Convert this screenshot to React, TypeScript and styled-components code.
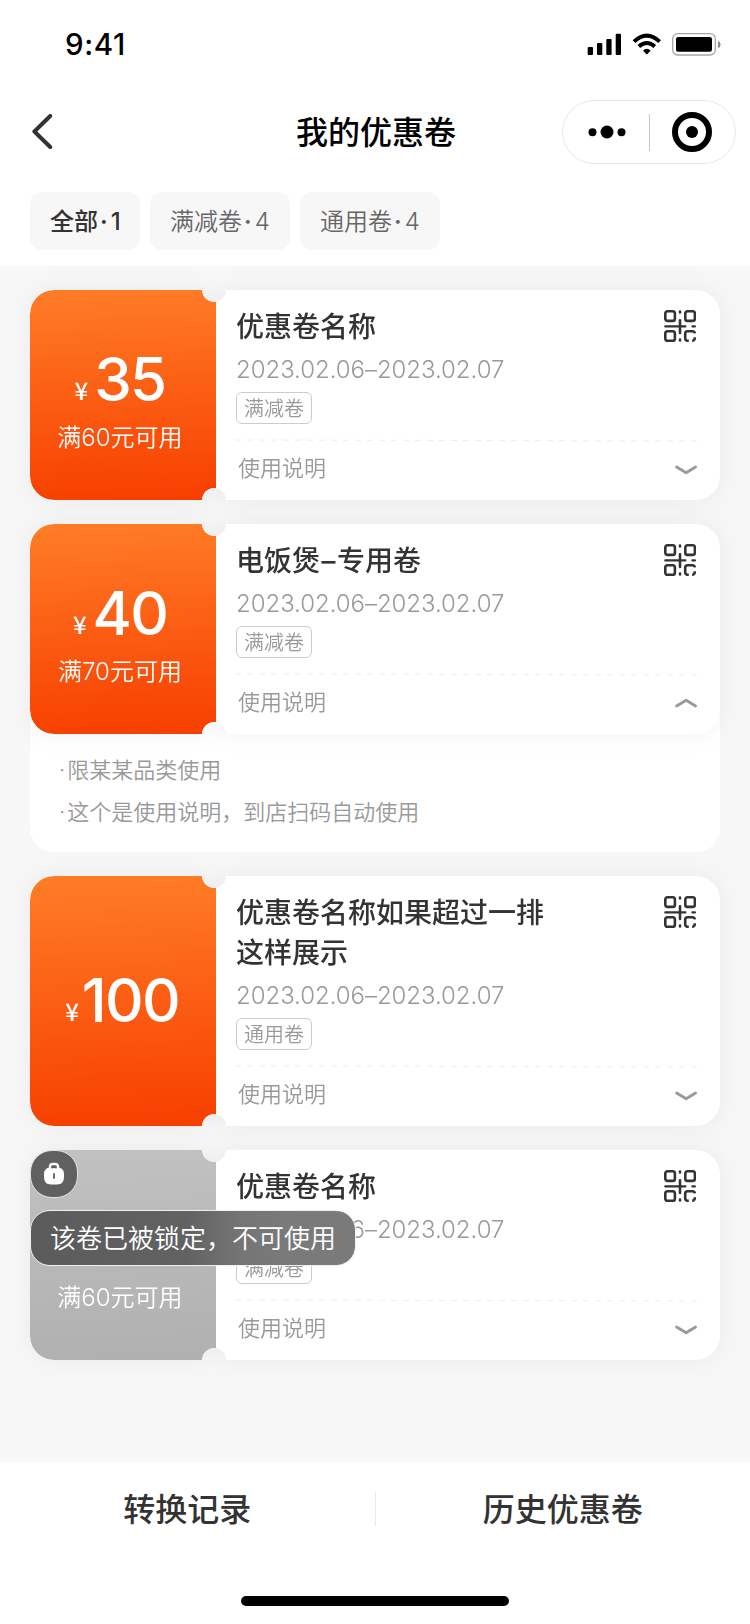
import React, { useState } from 'react';
import styled, { createGlobalStyle } from 'styled-components';

const GlobalStyle = createGlobalStyle`
  *, *::before, *::after { box-sizing: border-box; }
  body {
    margin: 0;
    background: #fff;
    font-family: Inter, "Noto Sans CJK SC", sans-serif;
    color: #333;
  }
  button {
    font: inherit;
    color: inherit;
    background: none;
    border: 0;
    padding: 0;
  }
  svg { display: block; }
`;

const Page = styled.div`
  width: 750px;
  height: 1624px;
  display: flex;
  flex-direction: column;
  background: #f7f7f7;
  overflow: hidden;
`;

const Header = styled.header`
  height: 266px;
  background: #fff;
`;

const StatusBar = styled.div`
  height: 88px;
  padding: 0 29px 0 65px;
  display: flex;
  align-items: center;
  justify-content: space-between;
`;

const Clock = styled.span`
  font-size: 29.5px;
  font-weight: 450;
  line-height: 36px;
  color: #000;
  letter-spacing: 0.6px;
`;

const NavBar = styled.div`
  height: 88px;
  padding: 0 13px 0 30px;
  display: grid;
  grid-template-columns: 175px 1fr 175px;
  align-items: center;
`;

const NavTitle = styled.h1`
  margin: 0;
  padding: 2px 15px 0 0;
  font-size: 32px;
  font-weight: 500;
  line-height: 44px;
  text-align: center;
  color: #000;
`;

const Capsule = styled.div`
  width: 174px;
  height: 64px;
  border: 1px solid #e8e8e8;
  border-radius: 32px;
  display: flex;
  align-items: center;
`;

const CapsuleHalf = styled.button`
  flex: 1;
  display: flex;
  justify-content: center;
`;

const CapsuleDivider = styled.span`
  width: 1px;
  height: 37px;
  background: #c8c8c8;
`;

const Tabs = styled.nav`
  padding: 16px 30px 0;
  display: flex;
  gap: 10px;
`;

const Tab = styled.button<{ $active?: boolean; $width: number }>`
  width: ${(p) => p.$width}px;
  height: 58px;
  padding-left: 20px;
  border-radius: 12px;
  background: #f7f7f7;
  text-align: left;
  white-space: nowrap;
  font-size: 24px;
  line-height: 60px;
  font-weight: ${(p) => (p.$active ? 500 : 350)};
  color: ${(p) => (p.$active ? '#333' : '#666')};
`;

const Dot = styled.span`
  margin: 0 3px 0 2px;
  font-weight: 600;
`;

const List = styled.main`
  flex: 1;
  padding: 24px 30px 0;
  display: flex;
  flex-direction: column;
  gap: 24px;
`;

const Item = styled.article`
  position: relative;
`;

const CardShadow = styled.div`
  position: relative;
  z-index: 1;
  filter: drop-shadow(0 0 12px rgba(0, 0, 0, 0.05));
`;

const Card = styled.div<{ $tall?: boolean }>`
  height: ${(p) => (p.$tall ? 250 : 210)}px;
  display: flex;
  border-radius: 24px;
  background: #fff;
  overflow: hidden;
  mask-image:
    radial-gradient(circle at 184px 0, transparent 11.7px, #000 12.3px),
    radial-gradient(circle at 184px 100%, transparent 11.7px, #000 12.3px);
  mask-composite: intersect;
`;

const ValuePanel = styled.div<{ $locked?: boolean }>`
  flex: 0 0 186px;
  padding-right: 6px;
  display: flex;
  flex-direction: column;
  align-items: center;
  justify-content: center;
  color: #fff;
  background: ${(p) =>
    p.$locked
      ? 'linear-gradient(177deg, #c1c1c1, #b0b0b0)'
      : 'linear-gradient(177deg, #ff7d27, #f73e00)'};
`;

const Amount = styled.div<{ $alone?: boolean; $covered?: boolean }>`
  height: 64px;
  margin-top: ${(p) => (p.$alone ? -2 : 11)}px;
  padding-left: ${(p) => (p.$alone ? 4 : 0)}px;
  display: flex;
  align-items: baseline;
  font-size: 60px;
  line-height: 64px;
  font-weight: 500;
  letter-spacing: -1.8px;
  visibility: ${(p) => (p.$covered ? 'hidden' : 'visible')};
`;

const Currency = styled.span<{ $tight?: boolean }>`
  position: relative;
  top: -1px;
  margin-right: ${(p) => (p.$tight ? 3 : 6)}px;
  font-family: "Noto Sans CJK SC", sans-serif;
  font-size: 24px;
  letter-spacing: 0;
`;

const Threshold = styled.div`
  margin-top: 10px;
  font-size: 24px;
  line-height: 34px;
  font-weight: 350;
  white-space: nowrap;
`;

const Body = styled.div`
  flex: 1;
  padding: 16px 22px 0 20px;
  display: flex;
  flex-direction: column;
`;

const TopRow = styled.div`
  display: flex;
  justify-content: space-between;
  align-items: flex-start;
`;

const Name = styled.h2`
  margin: 0;
  padding-top: 1px;
  width: 312px;
  font-size: 28px;
  line-height: 40px;
  font-weight: 500;
  color: #333;
`;

const NameDash = styled.span`
  margin: 0 1.5px;
`;

const QrButton = styled.button`
  padding: 4px 2px 0 0;
`;

const Period = styled.div`
  margin-top: 6px;
  font-size: 24px;
  line-height: 34px;
  font-weight: 300;
  letter-spacing: -0.05px;
  color: #999;
`;

const Tag = styled.span`
  align-self: flex-start;
  margin-top: 5px;
  width: 76px;
  height: 32px;
  border: 1px solid #ccc;
  border-radius: 6px;
  text-align: center;
  font-size: 20px;
  line-height: 32px;
  font-weight: 350;
  color: #999;
`;

const Dashes = styled.svg`
  margin: 14px 0 0 -1px;
`;

const UsageRow = styled.button`
  height: 54px;
  padding-left: 2px;
  display: flex;
  align-items: center;
  justify-content: space-between;
  font-size: 22px;
  line-height: 52px;
  font-weight: 350;
  color: #999;
`;

const UsageLabel = styled.span`
  height: 54px;
`;

const Rules = styled.div`
  margin-top: -34px;
  height: 152px;
  padding: 49px 28px 0;
  border-radius: 0 0 24px 24px;
  background: #fff;
  font-size: 22px;
  line-height: 42px;
  font-weight: 350;
  color: #999;
`;

const RuleDot = styled.span`
  margin: 0 2px 0 1px;
`;

const LockBadge = styled.div`
  position: absolute;
  z-index: 2;
  left: 0;
  top: 0;
  width: 48px;
  height: 48px;
  border: 1px solid #e2e2e2;
  border-radius: 22px;
  background: #606060;
  display: flex;
  align-items: center;
  justify-content: center;
`;

const LockTip = styled.div`
  position: absolute;
  z-index: 2;
  left: 0;
  top: 60px;
  width: 326px;
  height: 56px;
  padding-left: 19px;
  border: 1px solid #f0f0f0;
  border-radius: 20px;
  background: linear-gradient(90deg, #5b5b5b 0, #626262 48%, #757575 65%, #7a7a7a 80%);
  color: #fff;
  font-size: 26px;
  line-height: 56px;
  font-weight: 350;
  white-space: nowrap;
`;

const Footer = styled.footer`
  height: 162px;
  background: #fff;
  display: flex;
  flex-direction: column;
  align-items: center;
  justify-content: space-between;
  padding-bottom: 18px;
`;

const FooterActions = styled.div`
  width: 100%;
  height: 94px;
  display: flex;
  align-items: center;
`;

const FooterButton = styled.button`
  flex: 1;
  padding-top: 2px;
  text-align: center;
  font-size: 32px;
  line-height: 44px;
  font-weight: 500;
`;

const FooterDivider = styled.span`
  width: 1px;
  height: 34px;
  background: #e9e9e9;
`;

const HomeIndicator = styled.div`
  width: 268px;
  height: 10px;
  border-radius: 5px;
  background: #000;
`;

const StatusIcons = () => (
  <svg width="134" height="26" viewBox="587 31 134 26">
    <rect x="587.7" y="47" width="5.3" height="8" rx="1" />
    <rect x="597" y="43" width="5.3" height="12" rx="1" />
    <rect x="606.3" y="39" width="5.3" height="16" rx="1" />
    <rect x="615.7" y="33.7" width="5.3" height="21.3" rx="1" />
    <g fill="none" stroke="#000" strokeWidth="4">
      <path d="M634 41.6 Q646.8 29.6 659.6 41.6" strokeLinecap="butt" />
      <path d="M638.8 46.6 Q646.8 39.4 654.8 46.6" />
    </g>
    <path d="M643 50.6 Q646.8 47 650.6 50.6 L647.4 54 Q646.8 54.6 646.2 54 Z" />
    <rect x="672.7" y="33.7" width="42.6" height="21.3" rx="5" fill="none" stroke="#a6a6a6" strokeWidth="1.3" />
    <rect x="676" y="37" width="36" height="14.8" rx="2.2" />
    <path d="M718 41 Q720.6 42.2 720.6 44.6 Q720.6 47 718 48.2 Z" fill="#8a8a8a" />
  </svg>
);

const BackIcon = () => (
  <svg width="26" height="36" viewBox="30 114 26 36" fill="none" stroke="#333" strokeWidth="4" strokeLinecap="round" strokeLinejoin="round">
    <path d="M50.2 116 L34.4 131.5 L50.2 147" />
  </svg>
);

const MoreIcon = () => (
  <svg width="40" height="16" viewBox="-1 0 40 16">
    <circle cx="5.5" cy="8.3" r="4" />
    <circle cx="20" cy="8" r="6.5" />
    <circle cx="34.5" cy="8.3" r="4" />
  </svg>
);

const CloseIcon = () => (
  <svg width="40" height="40" viewBox="0 0 40 40">
    <circle cx="20" cy="20" r="17" fill="none" stroke="#000" strokeWidth="6" />
    <circle cx="20" cy="20" r="6" />
  </svg>
);

const QrIcon = () => (
  <svg width="32" height="32" viewBox="0 0 32 32" fill="none" stroke="#333" strokeWidth="2.6" strokeLinecap="round">
    <rect x="1.3" y="1.3" width="9.6" height="9.6" rx="2.2" />
    <rect x="21.3" y="1.3" width="9.6" height="9.6" rx="2.2" />
    <rect x="1.3" y="21.3" width="9.6" height="9.6" rx="2.2" />
    <path d="M16 1.6 V2.4 M16 10.4 V23 M16 29.6 V30.4" />
    <path d="M1.3 16.4 H21.4 M28.4 16.4 H30.9" strokeWidth="2.2" />
    <path d="M24.8 30.8 H23.6 A2.4 2.4 0 0 1 21.2 28.4 V23.6 A2.4 2.4 0 0 1 23.6 21.2 H28.4 A2.4 2.4 0 0 1 30.8 23.4" strokeLinecap="butt" />
    <path d="M30.8 27.2 V28.4 A2.4 2.4 0 0 1 28.2 30.6" strokeLinecap="butt" />
  </svg>
);

const ChevronIcon = ({ up }: { up?: boolean }) => (
  <svg width="24" height="12" viewBox="0 0 24 12" fill="none" stroke="#999" strokeWidth="2.8" strokeLinecap="round" strokeLinejoin="round">
    <path d={up ? 'M2.6 9 L12.1 3.2 L21.6 9' : 'M2.6 4 L12.1 9.8 L21.6 4'} />
  </svg>
);

const LockIcon = () => (
  <svg width="20" height="24" viewBox="0 0 20 24">
    <path d="M6 7 V5 Q6 2 9 2 H11 Q14 2 14 5 V7" fill="none" stroke="#fff" strokeWidth="2.4" />
    <path d="M6 5.5 H14 Q20 6 20 12 V15 Q20 22.5 13 22.5 H7 Q0 22.5 0 15 V12 Q0 6 6 5.5 Z" fill="#fff" />
    <path d="M10 12 V16" stroke="#606060" strokeWidth="1.8" strokeLinecap="round" />
    <path d="M7.3 5.6 Q10 4.4 12.7 5.6" fill="none" stroke="#606060" strokeWidth="1.8" />
  </svg>
);

interface Coupon {
  id: number;
  amount: number;
  threshold?: string;
  name: React.ReactNode;
  tag: string;
  locked?: boolean;
  rules: string[];
}

const RULES = ['限某某品类使用', '这个是使用说明，到店扫码自动使用'];

const COUPONS: Coupon[] = [
  { id: 1, amount: 35, threshold: '满60元可用', name: '优惠卷名称', tag: '满减卷', rules: RULES },
  {
    id: 2,
    amount: 40,
    threshold: '满70元可用',
    name: (
      <>
        电饭煲<NameDash>–</NameDash>专用卷
      </>
    ),
    tag: '满减卷',
    rules: RULES,
  },
  { id: 3, amount: 100, name: '优惠卷名称如果超过一排这样展示', tag: '通用卷', rules: RULES },
  { id: 4, amount: 35, threshold: '满60元可用', name: '优惠卷名称', tag: '满减卷', locked: true, rules: RULES },
];

const TABS = [
  { label: '全部', count: 1, width: 110 },
  { label: '满减卷', count: 4, width: 140 },
  { label: '通用卷', count: 4, width: 140 },
];

const CouponItem = ({ coupon, open, onToggle }: { coupon: Coupon; open: boolean; onToggle: () => void }) => (
  <Item>
    <CardShadow>
      <Card $tall={!coupon.threshold}>
        <ValuePanel $locked={coupon.locked}>
          <Amount $alone={!coupon.threshold} $covered={coupon.locked}>
            <Currency $tight={!coupon.threshold}>¥</Currency>
            {coupon.amount}
          </Amount>
          {coupon.threshold && <Threshold>{coupon.threshold}</Threshold>}
        </ValuePanel>
        <Body>
          <TopRow>
            <Name>{coupon.name}</Name>
            <QrButton aria-label="二维码">
              <QrIcon />
            </QrButton>
          </TopRow>
          <Period>2023.02.06–2023.02.07</Period>
          <Tag>{coupon.tag}</Tag>
          <Dashes width="463" height="4" viewBox="0 0 463 4">
            <path d="M0 2 L462 3" stroke="#eee" strokeWidth="1" strokeDasharray="6 6" />
          </Dashes>
          <UsageRow onClick={onToggle}>
            <UsageLabel>使用说明</UsageLabel>
            <ChevronIcon up={open} />
          </UsageRow>
        </Body>
      </Card>
    </CardShadow>
    {open && (
      <Rules>
        {coupon.rules.map((rule) => (
          <div key={rule}>
            <RuleDot>·</RuleDot>
            {rule}
          </div>
        ))}
      </Rules>
    )}
    {coupon.locked && (
      <>
        <LockBadge>
          <LockIcon />
        </LockBadge>
        <LockTip>该卷已被锁定，不可使用</LockTip>
      </>
    )}
  </Item>
);

export default function App() {
  const [activeTab, setActiveTab] = useState(0);
  const [openId, setOpenId] = useState<number | null>(2);

  return (
    <>
      <GlobalStyle />
      <Page>
        <Header>
          <StatusBar>
            <Clock>9:41</Clock>
            <StatusIcons />
          </StatusBar>
          <NavBar>
            <BackIcon />
            <NavTitle>我的优惠卷</NavTitle>
            <Capsule>
              <CapsuleHalf aria-label="更多">
                <MoreIcon />
              </CapsuleHalf>
              <CapsuleDivider />
              <CapsuleHalf aria-label="关闭">
                <CloseIcon />
              </CapsuleHalf>
            </Capsule>
          </NavBar>
          <Tabs>
            {TABS.map((tab, i) => (
              <Tab key={tab.label} $active={i === activeTab} $width={tab.width} onClick={() => setActiveTab(i)}>
                {tab.label}
                <Dot>·</Dot>
                {tab.count}
              </Tab>
            ))}
          </Tabs>
        </Header>
        <List>
          {COUPONS.map((c) => (
            <CouponItem
              key={c.id}
              coupon={c}
              open={openId === c.id}
              onToggle={() => setOpenId(openId === c.id ? null : c.id)}
            />
          ))}
        </List>
        <Footer>
          <FooterActions>
            <FooterButton>转换记录</FooterButton>
            <FooterDivider />
            <FooterButton>历史优惠卷</FooterButton>
          </FooterActions>
          <HomeIndicator />
        </Footer>
      </Page>
    </>
  );
}
